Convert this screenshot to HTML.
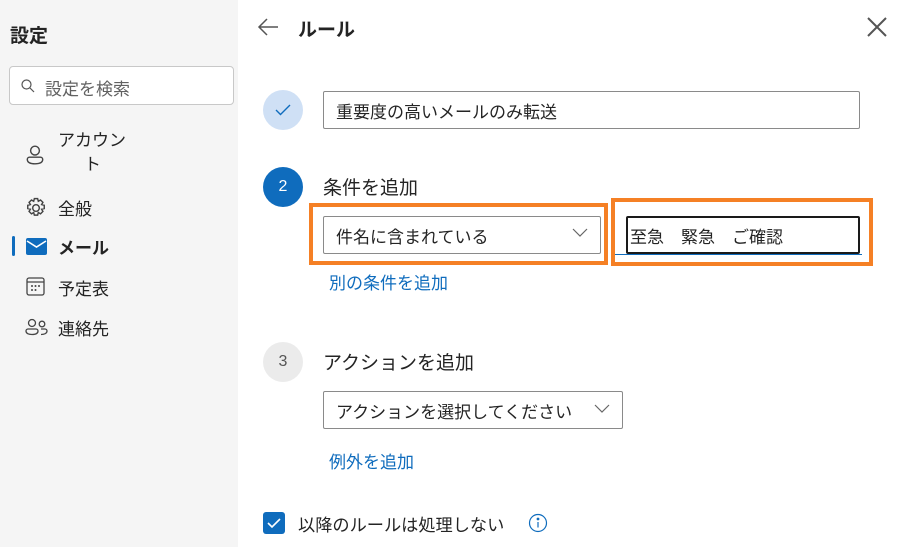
<!DOCTYPE html>
<html><head><meta charset="utf-8"><style>
*{box-sizing:border-box;margin:0;padding:0}
body{width:899px;height:547px;overflow:hidden;font-family:"Liberation Sans","Noto Sans CJK JP",sans-serif;background:#fff;position:relative;color:#242424}
.side{position:absolute;left:0;top:0;width:238px;height:547px;background:#f5f5f5}
.a{position:absolute}
.nav{position:absolute;left:58px;font-size:17px;color:#242424}
.box{position:absolute;border:1px solid #8a8a8a;border-radius:2px;background:#fff;font-size:17px;padding-left:12px;display:flex;align-items:center}
.circ{position:absolute;width:40px;height:40px;border-radius:50%;display:flex;align-items:center;justify-content:center;font-size:16px}
.link{position:absolute;color:#0f6cbd;font-size:17px}
</style></head><body>
<div class="side"></div>
<div class="a" style="left:10px;top:21px;font-size:19px;font-weight:bold">設定</div>
<div class="a" style="left:9px;top:66px;width:225px;height:39px;border:1px solid #c8c8c8;border-radius:4px;background:#fff"></div>
<svg class="a" style="left:20px;top:78px" width="16" height="16" viewBox="0 0 16 16"><circle cx="6.5" cy="6.5" r="4.5" fill="none" stroke="#555" stroke-width="1.2"/><path d="M10 10l4 4" stroke="#555" stroke-width="1.2"/></svg>
<div class="a" style="left:45px;top:75px;font-size:17px;color:#616161">設定を検索</div>
<svg class="a" style="left:24px;top:144px" width="22" height="22" viewBox="0 0 20 20" fill="none" stroke="#444" stroke-width="1.3"><circle cx="10" cy="6" r="4"/><path d="M3 14a2 2 0 0 1 2-2h10a2 2 0 0 1 2 2c0 3-3 4-7 4s-7-1-7-4z"/></svg>
<div class="nav" style="top:129px;width:80px;line-height:24px">アカウン<br><span style="padding-left:26px">ト</span></div>
<svg class="a" style="left:25px;top:197px" width="22" height="22" viewBox="0 0 20 20" fill="none" stroke="#444" stroke-width="1.3"><circle cx="10" cy="10" r="3"/><path d="M8.5 1.5h3l.6 2.4 2-1.2 2.2 2.2-1.2 2 2.4.6v3l-2.4.6 1.2 2-2.2 2.2-2-1.2-.6 2.4h-3l-.6-2.4-2 1.2-2.2-2.2 1.2-2-2.4-.6v-3l2.4-.6-1.2-2 2.2-2.2 2 1.2z"/></svg>
<div class="nav" style="top:195px">全般</div>
<div class="a" style="left:12px;top:236px;width:3px;height:20px;background:#0f6cbd;border-radius:2px"></div>
<svg class="a" style="left:26px;top:238px" width="21" height="17" viewBox="0 0 21 17"><rect x="0" y="0" width="21" height="17" rx="2" fill="#0f6cbd"/><path d="M1 3l9.5 6L20 3" fill="none" stroke="#fff" stroke-width="1.6"/></svg>
<div class="nav" style="top:234px;font-weight:bold">メール</div>
<svg class="a" style="left:26px;top:277px" width="20" height="19" viewBox="0 0 20 19" fill="none" stroke="#444" stroke-width="1.3"><rect x="1" y="1" width="17" height="17" rx="2"/><path d="M1 5h17"/><g fill="#444" stroke="none"><circle cx="6" cy="9" r="1"/><circle cx="9.5" cy="9" r="1"/><circle cx="13" cy="9" r="1"/><circle cx="6" cy="13" r="1"/><circle cx="9.5" cy="13" r="1"/></g></svg>
<div class="nav" style="top:275px">予定表</div>
<svg class="a" style="left:25px;top:318px" width="24" height="18" viewBox="0 0 24 18" fill="none" stroke="#444" stroke-width="1.3"><circle cx="7" cy="5" r="3.5"/><path d="M1 13a2 2 0 0 1 2-2h8a2 2 0 0 1 2 2c0 2.5-2.5 3.5-6 3.5S1 15.5 1 13z"/><circle cx="17" cy="6" r="2.8"/><path d="M16 16.5c3 0 6-1 6-3.5a2 2 0 0 0-2-2h-4"/></svg>
<div class="nav" style="top:315px">連絡先</div>

<svg class="a" style="left:257px;top:17px" width="22" height="20" viewBox="0 0 22 20" fill="none" stroke="#555" stroke-width="1.5"><path d="M21 10H2M10 2L2 10l8 8"/></svg>
<div class="a" style="left:298px;top:15px;font-size:19px;font-weight:bold">ルール</div>
<svg class="a" style="left:866px;top:16px" width="22" height="22" viewBox="0 0 22 22" stroke="#555" stroke-width="2"><path d="M2 2l18 18M20 2L2 20"/></svg>

<div class="circ" style="left:263px;top:90px;background:#cfe0f5"><svg width="16" height="12" viewBox="0 0 16 12" fill="none" stroke="#0f6cbd" stroke-width="1.4"><path d="M1 6l4.5 4.5L15 1"/></svg></div>
<div class="box" style="left:323px;top:91px;width:537px;height:38px">重要度の高いメールのみ転送</div>

<div class="circ" style="left:263px;top:167px;background:#0f6cbd;color:#fff">2</div>
<div class="a" style="left:323px;top:173px;font-size:19px">条件を追加</div>
<div class="a" style="left:309px;top:203px;width:299px;height:62px;border:4px solid #f58025"></div>
<div class="box" style="left:323px;top:216px;width:278px;height:38px">件名に含まれている</div>
<svg class="a" style="left:572px;top:228px" width="16" height="10" viewBox="0 0 16 10" fill="none" stroke="#666" stroke-width="1.2"><path d="M1 1l7 7 7-7"/></svg>
<div class="a" style="left:611px;top:198px;width:262px;height:68px;border:4px solid #f58025"></div>
<div class="a" style="left:615px;top:254px;width:247px;height:1px;background:#0f6cbd"></div>
<div class="box" style="left:626px;top:216px;width:234px;height:38px;border:2px solid #1a1a1a;padding-left:2px">至急　緊急　ご確認</div>
<div class="link" style="left:329px;top:269px">別の条件を追加</div>

<div class="circ" style="left:263px;top:342px;background:#ebebeb;color:#555">3</div>
<div class="a" style="left:323px;top:348px;font-size:19px">アクションを追加</div>
<div class="box" style="left:323px;top:391px;width:300px;height:38px">アクションを選択してください</div>
<svg class="a" style="left:594px;top:404px" width="16" height="10" viewBox="0 0 16 10" fill="none" stroke="#666" stroke-width="1.2"><path d="M1 1l7 7 7-7"/></svg>
<div class="link" style="left:329px;top:448px">例外を追加</div>

<div class="a" style="left:263px;top:512px;width:22px;height:22px;background:#0f6cbd;border-radius:3px"><svg width="22" height="22" viewBox="0 0 22 22" fill="none" stroke="#fff" stroke-width="1.6"><path d="M5 11l4 4 8-8"/></svg></div>
<div class="a" style="left:298px;top:511px;font-size:17.2px">以降のルールは処理しない</div>
<svg class="a" style="left:528px;top:513px" width="20" height="20" viewBox="0 0 20 20" fill="none" stroke="#0f6cbd" stroke-width="1.2"><circle cx="10" cy="10" r="8.5"/><path d="M10 9v5.5"/><circle cx="10" cy="6" r=".8" fill="#0f6cbd"/></svg>
</body></html>
